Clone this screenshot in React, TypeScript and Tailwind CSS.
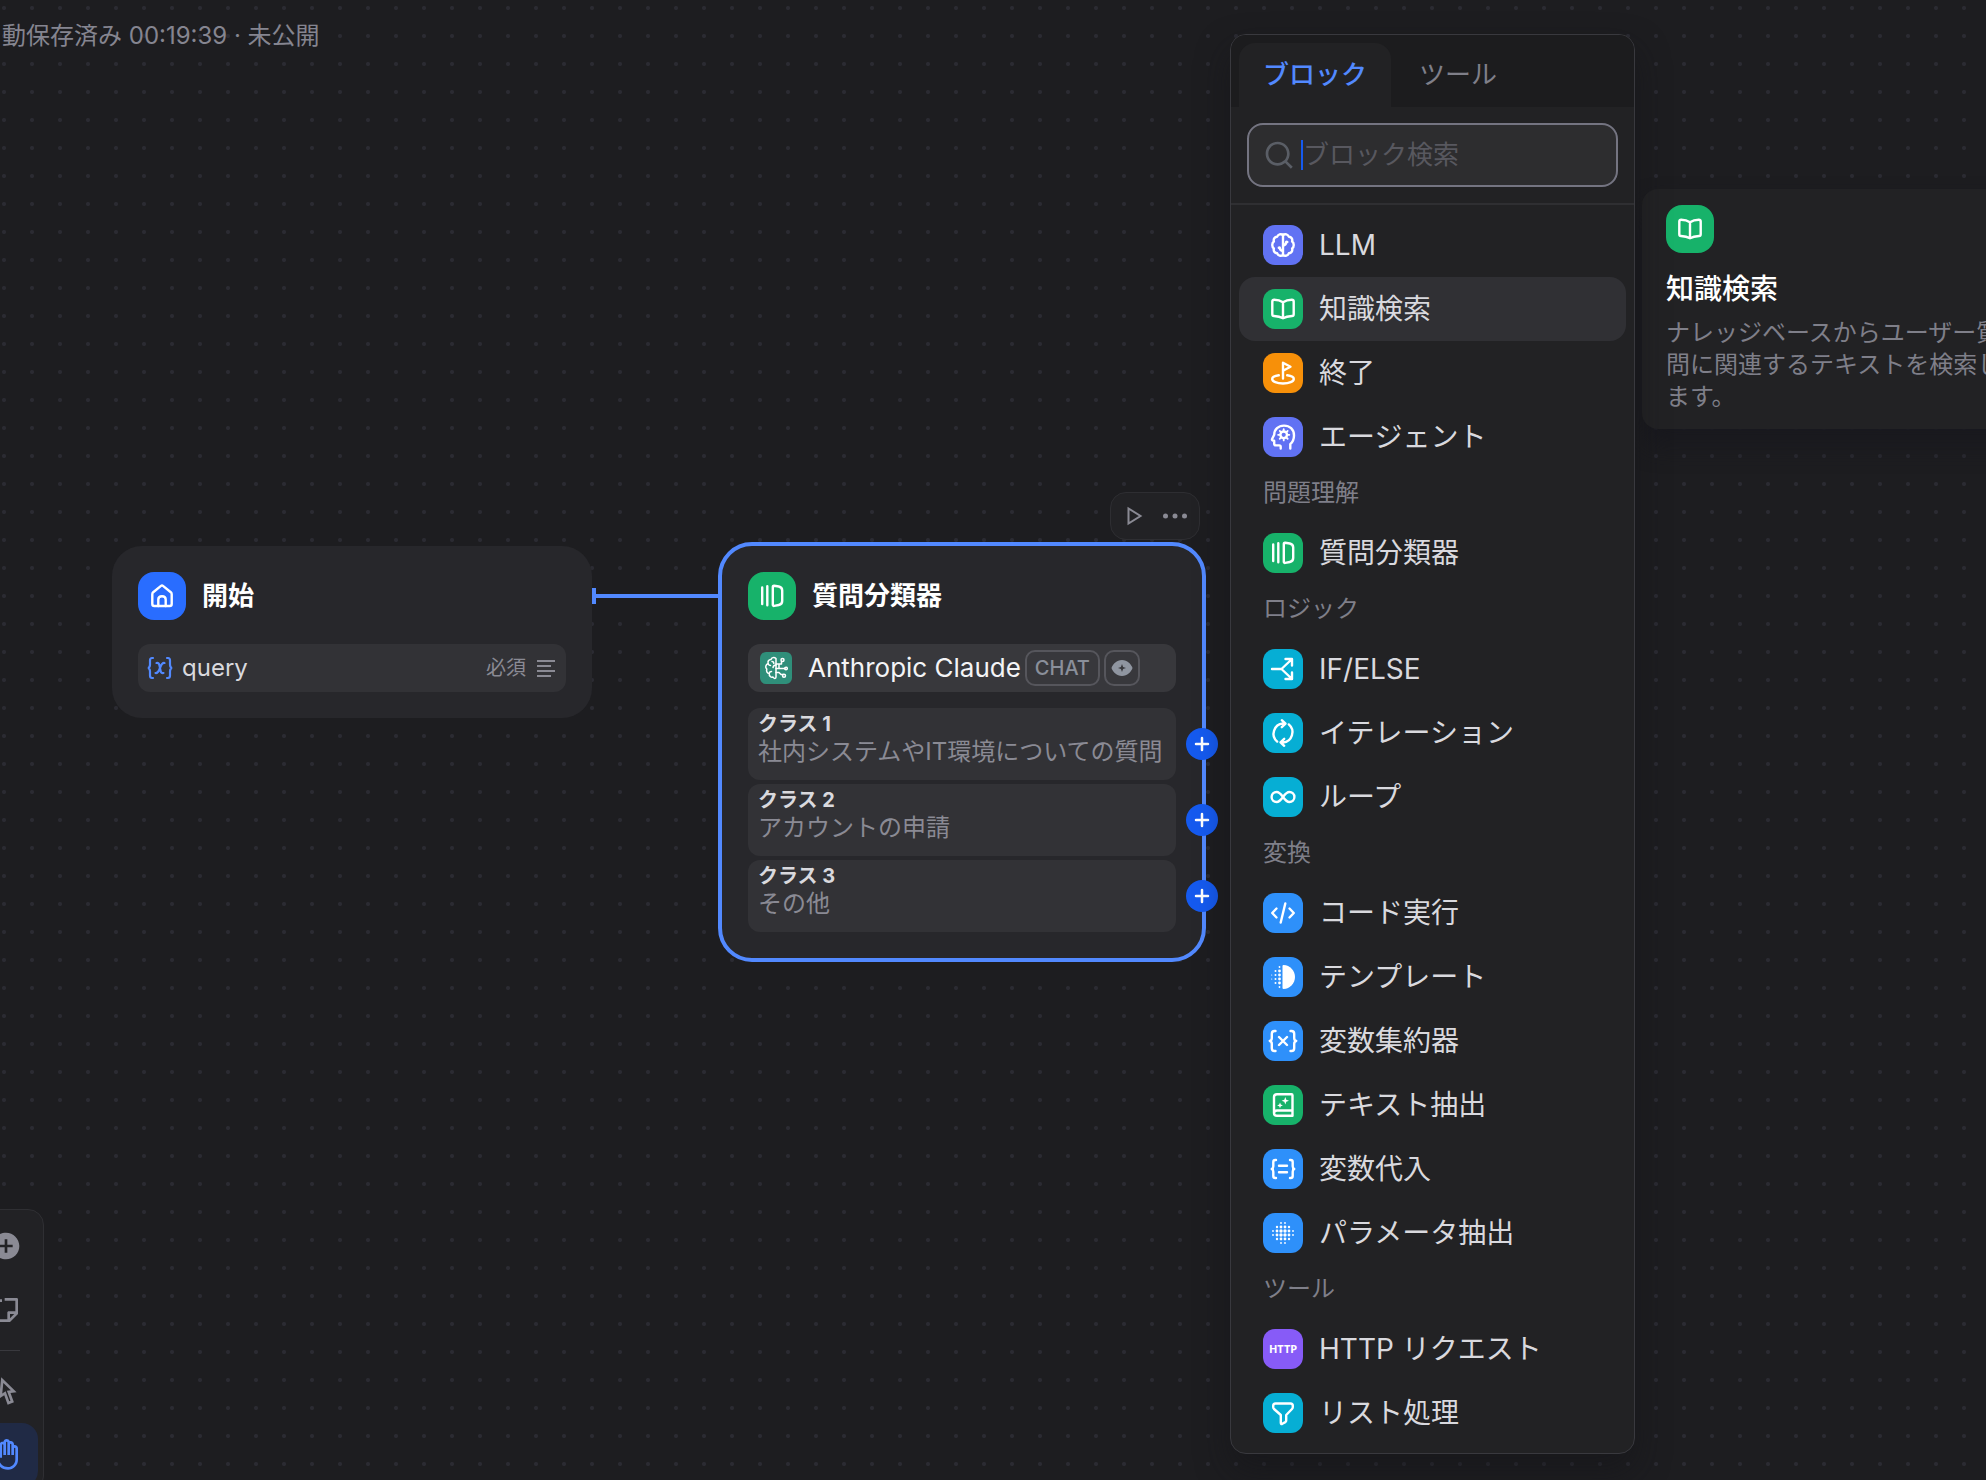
import type { ReactNode } from "react";
import { RiAddCircleFill, RiCursorLine, RiHand, RiSearchLine, RiStickyNoteAddLine } from "react-icons/ri";

type IconName =
  | "home" | "llm" | "book" | "end" | "agent" | "classifier" | "branch" | "iteration" | "loop"
  | "code" | "template" | "aggregator" | "extractor" | "assigner" | "parameter" | "http" | "filter";

const GRID = [2, 6, 10, 14, 18, 22];

const gear = Array.from({ length: 8 }, (_, i) => {
  const a = (i * Math.PI) / 4;
  return { x1: 12.7 + 3.6 * Math.cos(a), y1: 9.8 + 3.6 * Math.sin(a), x2: 12.7 + 5.6 * Math.cos(a), y2: 9.8 + 5.6 * Math.sin(a) };
});

const glyphs: Record<Exclude<IconName, "http">, ReactNode> = {
  home: (
    <>
      <path d="M2.3 10.2Q2.3 9 3.2 8.2L11 1.9Q12 1.1 13 1.9L20.8 8.2Q21.7 9 21.7 10.2V20Q21.7 22 19.7 22H4.3Q2.3 22 2.3 20Z" />
      <path d="M8.3 22V15.5Q8.3 12.2 12 12.2T15.7 15.5V22" />
    </>
  ),
  llm: (
    <>
      <path d="M12 2C10 .4 7 1.300 6.200 3.700C3.600 3.900 2.200 6 2.900 8.500C.7 10 .7 14 2.900 15.500C2.200 18 3.600 20.100 6.200 20.300C7 22.700 10 23.600 12 22C14 23.600 17 22.700 17.800 20.300C20.400 20.100 21.800 18 21.100 15.500C23.300 14 23.300 10 21.100 8.500C21.800 6 20.400 3.900 17.800 3.700C17 1.300 14 .4 12 2Z" />
      <path d="M12 2V22M12 12.500C14 12.300 15.200 11 15.200 9M12 18C10 17.800 8.800 16.600 8.800 14.800M15.300 9H16.300M8.700 14.800H7.800" />
    </>
  ),
  book: <path d="M12 5.200C9.500 3.500 6.500 2.700 3.200 2.700Q1.300 2.700 1.300 4.500V17.200Q1.300 18.900 3 19C6.500 19.200 9.500 19.800 12 21.200C14.500 19.800 17.500 19.200 21 19Q22.700 18.900 22.700 17.200V4.500Q22.700 2.700 20.800 2.700C17.500 2.700 14.500 3.500 12 5.200ZM12 5.200V21" />,
  end: (
    <>
      <path d="M12 17.500V1.800L19.500 5.800L12 9.800" />
      <path d="M7.800 14.300C3.600 14.800 1.200 16.200 1.200 18C1.200 20.600 5.800 22.500 12 22.500S22.800 20.600 22.800 18C22.800 16.200 20.400 14.800 16.200 14.300" />
    </>
  ),
  agent: (
    <>
      <path d="M19.300 23.500V19.200C21.600 17 23 13.800 23 10.400C23 4.300 18.700.6 13 .6C7.300.6 3.300 4.500 3.200 9.800L1.100 14Q.7 15.300 1.900 15.500L3.200 15.700V18.800Q3.200 20.400 4.800 20.400H8.300Q9.700 20.400 9.700 21.800V23.500" />
      <circle cx="12.700" cy="9.800" r="3.300" />
      {gear.map((g, i) => <line key={i} {...g} strokeWidth="1.8" />)}
    </>
  ),
  classifier: <path d="M2.200 3.500V20M7.300 2.200V21.300M12.800 2.900Q12.800 1.500 14.200 1.700L18.800 2.500Q22.200 3.200 22.200 6.600V17Q22.200 20.300 18.800 21L14.200 21.900Q12.800 22.100 12.800 20.700Z" />,
  branch: <path d="M1 12H10.500L20.500 2.500M10.500 12L20.500 21.500M14.500 2H21V8.500M14.500 22H21V15.500" />,
  iteration: (
    <>
      <path d="M6.200 20.600A10.300 10.300 0 0 1 12 2.500H14.300M10.800-.8L14.500 2.700L10.800 6.200" />
      <path d="M17.800 3.400A10.300 10.300 0 0 1 12 21.500H9.700M13.200 24.800L9.500 21.300L13.200 17.800" />
    </>
  ),
  loop: <path d="M12 12C10 9.200 8.200 7 5.600 7A5 5 0 0 0 5.600 17C8.200 17 10 14.800 12 12C14 9.200 15.800 7 18.400 7A5 5 0 0 1 18.400 17C15.800 17 14 14.800 12 12Z" />,
  code: <path d="M5.500 7.500L1.200 12L5.500 16.500M18.500 7.500L22.800 12L18.500 16.500M14.300 2.500L9.700 21.500" />,
  template: (
    <g fill="currentColor" stroke="none">
      <path d="M11.500 1Q11.500 0 12.500 0C19 .3 24 5.500 24 12S19 23.700 12.500 24Q11.500 24 11.500 23Z" />
      {GRID.map((y, i) => <circle key={y} cx="8.500" cy={y} r={i === 0 || i === 5 ? 0.9 : 1.4} />)}
      {GRID.slice(1, 5).map((y) => <circle key={y} cx="4.500" cy={y} r="1" />)}
      <circle cx=".7" cy="10" r=".6" />
      <circle cx=".7" cy="14" r=".6" />
    </g>
  ),
  aggregator: <path d="M4.500 2H3.500Q.8 2 .8 4.700V9Q.8 11.500-1.200 12Q.8 12.500.8 15V19.300Q.8 22 3.500 22H4.500M19.500 2H20.500Q23.200 2 23.200 4.700V9Q23.200 11.500 25.200 12Q23.200 12.500 23.200 15V19.300Q23.200 22 20.500 22H19.500M8 8L16 16M16 8L8 16" />,
  extractor: (
    <>
      <path d="M6 1.200H20.500Q21.500 1.200 21.500 2.200V22.800H6Q3 22.800 3 20V4Q3 1.200 6 1.200ZM3 20.200Q3 17.500 6 17.500H21.500" />
      <path fill="currentColor" stroke="none" d="M14.300 4L15.300 6.700L18 7.700L15.300 8.700L14.300 11.400L13.300 8.700L10.600 7.700L13.300 6.700ZM9 9.500L9.800 11.600L11.900 12.400L9.800 13.200L9 15.300L8.200 13.200L6.100 12.400L8.200 11.600Z" />
    </>
  ),
  assigner: <path d="M5 3H4.300Q2.300 3 2.300 5V9.300Q2.300 11.500.8 12Q2.300 12.500 2.300 14.700V19Q2.300 21 4.300 21H5M19 3H19.700Q21.700 3 21.700 5V9.300Q21.700 11.500 23.200 12Q21.700 12.500 21.700 14.700V19Q21.700 21 19.700 21H19M8 8.800H16M8 15.200H16" />,
  parameter: (
    <g fill="currentColor" stroke="none">
      {GRID.flatMap((x) =>
        GRID.map((y) => {
          const d = Math.hypot(x - 12, y - 12);
          return d > 11 ? null : <circle key={`${x}-${y}`} cx={x} cy={y} r={d < 4 ? 1.7 : d < 7 ? 1.4 : d < 9 ? 1.2 : 0.9} />;
        }),
      )}
    </g>
  ),
  filter: <path d="M4.500 2.500H19.500Q21.800 2.500 21.800 4.800V6Q21.800 7.200 21 8L15.200 14V19.500Q15.200 20.500 14.300 21.100L11.300 22.800Q9.800 23.500 9.800 21.800V14L3 8Q2.200 7.200 2.200 6V4.800Q2.200 2.500 4.500 2.500Z" />,
};

const iconColors: Record<IconName, string> = {
  home: "bg-[#296dff]",
  llm: "bg-[#6172f3]",
  agent: "bg-[#6172f3]",
  book: "bg-[#17b26a]",
  classifier: "bg-[#17b26a]",
  extractor: "bg-[#17b26a]",
  end: "bg-[#f79009]",
  branch: "bg-[#06aed4]",
  iteration: "bg-[#06aed4]",
  loop: "bg-[#06aed4]",
  filter: "bg-[#06aed4]",
  code: "bg-[#2e90fa]",
  template: "bg-[#2e90fa]",
  aggregator: "bg-[#2e90fa]",
  assigner: "bg-[#2e90fa]",
  parameter: "bg-[#2e90fa]",
  http: "bg-[#875bf7]",
};

function BlockIcon({ name, large = false }: { name: IconName; large?: boolean }) {
  return (
    <span
      className={`flex shrink-0 items-center justify-center text-white ${large ? "size-12 rounded-2xl" : "size-10 rounded-xl"} ${iconColors[name]}`}
    >
      {name === "http" ? (
        <span aria-hidden="true" className="font-['Noto_Sans'] text-[11px] font-bold">HTTP</span>
      ) : (
        <svg viewBox="0 0 24 24" className="size-6 overflow-visible" fill="none" stroke="currentColor" strokeWidth="2.4" strokeLinecap="round" strokeLinejoin="round" aria-hidden="true">
          {glyphs[name]}
        </svg>
      )}
    </span>
  );
}

const groups: { title?: string; items: { icon: IconName; label: string; active?: boolean }[] }[] = [
  {
    items: [
      { icon: "llm", label: "LLM" },
      { icon: "book", label: "知識検索", active: true },
      { icon: "end", label: "終了" },
      { icon: "agent", label: "エージェント" },
    ],
  },
  { title: "問題理解", items: [{ icon: "classifier", label: "質問分類器" }] },
  {
    title: "ロジック",
    items: [
      { icon: "branch", label: "IF/ELSE" },
      { icon: "iteration", label: "イテレーション" },
      { icon: "loop", label: "ループ" },
    ],
  },
  {
    title: "変換",
    items: [
      { icon: "code", label: "コード実行" },
      { icon: "template", label: "テンプレート" },
      { icon: "aggregator", label: "変数集約器" },
      { icon: "extractor", label: "テキスト抽出" },
      { icon: "assigner", label: "変数代入" },
      { icon: "parameter", label: "パラメータ抽出" },
    ],
  },
  {
    title: "ツール",
    items: [
      { icon: "http", label: "HTTP リクエスト" },
      { icon: "filter", label: "リスト処理" },
    ],
  },
];

function BlockMenu() {
  return (
    <section aria-label="ブロック" className="absolute left-[1230px] top-[34px] w-[405px] overflow-hidden rounded-2xl border border-[#39393e] bg-[#222224] shadow-[0_16px_32px_rgba(20,20,24,0.5)]">
      <div role="tablist" className="flex gap-1 bg-[#1c1c1e] px-2 pt-2 text-[26px] leading-8">
        <button role="tab" aria-selected="true" className="h-16 rounded-t-2xl bg-[#222224] px-6 font-medium text-[#5289ff]">ブロック</button>
        <button role="tab" aria-selected="false" className="h-16 px-6 text-[#7f7f89]">ツール</button>
      </div>
      <div className="border-b-2 border-[#2f2f32] p-4">
        <label className="flex h-16 items-center rounded-2xl border-2 border-[#747481] bg-[#2d2d2f] pl-3.5 pr-4">
          <RiSearchLine className="mr-1.5 size-8 shrink-0 text-[#5a5e66]" aria-hidden="true" />
          <span className="h-[30px] w-0.5 shrink-0 bg-[#155aef]" />
          <input aria-label="ブロック検索" placeholder="ブロック検索" className="min-w-0 flex-1 bg-transparent text-[26px] leading-8 text-[#d9d9de] outline-none placeholder:text-[#58585f]" />
        </label>
      </div>
      <div className="p-2">
        {groups.map((group, i) => (
          <div key={i}>
            {group.title && <h3 className="h-13 px-6 text-2xl leading-12 text-[#7f7f89]">{group.title}</h3>}
            {group.items.map((item) => (
              <button key={item.label} className={`flex h-16 w-full items-center gap-4 rounded-2xl px-6 text-left text-[28px] leading-10 text-[#d9d9de] ${item.active ? "bg-[#303034]" : ""}`}>
                <BlockIcon name={item.icon} />
                {item.label}
              </button>
            ))}
          </div>
        ))}
      </div>
    </section>
  );
}

function BlockTooltip() {
  return (
    <aside role="tooltip" className="absolute left-[1642px] top-[189px] w-[400px] rounded-2xl bg-[#222224] px-6 py-4 shadow-[0_16px_24px_rgba(24,24,30,0.9)]">
      <BlockIcon name="book" large />
      <h2 className="mb-2 mt-4 text-[28px] font-medium leading-10 text-white">知識検索</h2>
      <p className="text-2xl leading-8 text-[#7f7f89]">ナレッジベースからユーザー質問に関連するテキストを検索します。</p>
    </aside>
  );
}

function StartNode() {
  return (
    <article className="absolute left-[112px] top-[546px] w-[480px] rounded-[30px] bg-[#27272b] p-[26px]">
      <header className="flex items-center gap-4">
        <BlockIcon name="home" large />
        <h2 className="text-[26px] font-bold leading-8 text-white">開始</h2>
      </header>
      <div className="mt-6 flex h-12 items-center rounded-xl bg-[#323236] pl-2 pr-2.5">
        <svg viewBox="0 0 28 24" className="mr-2 h-6 w-7 text-[#5289ff]" fill="none" stroke="currentColor" strokeWidth="2.200" strokeLinecap="round" aria-hidden="true">
          <path d="M7 2H6Q4 2 4 4.500V8.500Q4 11.500 2 12Q4 12.500 4 15.500V19.500Q4 22 6 22H7M21 2H22Q24 2 24 4.500V8.500Q24 11.500 26 12Q24 12.500 24 15.500V19.500Q24 22 22 22H21M10.500 7Q13 6.500 13.500 9.500L14.500 14.500Q15 17.500 17.500 17M18.500 7Q16 6.500 14 12T9.500 17" />
        </svg>
        <span className="flex-1 text-2xl leading-8 text-[#d9d9de]">query</span>
        <span className="text-xl leading-6 text-[#8a8a94]">必須</span>
        <svg viewBox="0 0 20 18" className="ml-2.5 h-[18px] w-5 text-[#8a8a94]" stroke="currentColor" strokeWidth="2" aria-hidden="true">
          <path d="M1 2H19M1 7H15M1 12H19M1 17H15" />
        </svg>
      </div>
    </article>
  );
}

const classes = [
  { title: "クラス 1", text: "社内システムやIT環境についての質問" },
  { title: "クラス 2", text: "アカウントの申請" },
  { title: "クラス 3", text: "その他" },
];

function ClassifierNode() {
  return (
    <article className="absolute left-[718px] top-[542px] w-[488px] rounded-[34px] border-4 border-[#5289ff] bg-[#27272b] px-[26px] py-[26px]">
      <header className="flex items-center gap-4">
        <BlockIcon name="classifier" large />
        <h2 className="text-[26px] font-bold leading-8 text-white">質問分類器</h2>
      </header>
      <div className="mt-6 flex h-12 items-center rounded-xl bg-[#38383c] px-3">
        <span className="mr-4 flex size-8 items-center justify-center rounded-md bg-[#2f8f7a] text-white">
          <svg viewBox="0 0 24 24" className="size-6" fill="none" stroke="currentColor" strokeWidth="1.500" strokeLinecap="round" strokeLinejoin="round" aria-hidden="true">
            <path d="M12 2.500C10 .8 7.500 1.500 7 3.500C4.500 3.500 3.500 5.500 4.200 7.500C1.500 8.500 1 11.500 2.800 13C2 15.500 3.300 17.300 5.200 17.500C5 20 7 21.800 9 21C10 23 12 22.700 12 21Z" />
            <path d="M4.200 8Q5 9.500 6.500 9.500M8 5.500Q9.800 5.500 9.800 7.500M5.300 17.300Q5.500 15.500 7.500 15.500M12 9Q9.500 9 9 11.500M12 8H17.500V5.500M12 12.500H21M12 16.500H15L17 18.500H19.500M15 8V12" />
            <circle cx="18.500" cy="4" r="1.500" /><circle cx="22" cy="12.500" r="1.300" /><circle cx="20" cy="19.800" r="1.500" />
          </svg>
        </span>
        <span className="text-[26px] leading-8 text-[#f4f4f6]">Anthropic Claude</span>
        <span className="ml-1 flex h-9 items-center rounded-[10px] border-2 border-[#56565c] px-2 text-xl font-medium leading-6 text-[#8a8f9a]">CHAT</span>
        <span className="ml-1 flex size-9 items-center justify-center rounded-[10px] border-2 border-[#56565c] text-[#8f95a0]">
          <svg viewBox="0 0 24 24" className="size-6" fill="currentColor" fillRule="evenodd" aria-hidden="true">
            <path d="M12 4C17.500 4 20.800 8.200 22.200 11Q22.700 12 22.200 13C20.800 15.800 17.500 20 12 20S3.200 15.800 1.800 13Q1.300 12 1.800 11C3.200 8.200 6.500 4 12 4ZM12 8L10.900 10.900L8 12L10.900 13.100L12 16L13.100 13.100L16 12L13.100 10.900Z" />
          </svg>
        </span>
      </div>
      <ul className="mt-4 flex flex-col gap-1">
        {classes.map((c) => (
          <li key={c.title} className="relative h-[72px] rounded-xl bg-[#323236] px-2.5 pt-1">
            <h3 className="text-xl font-bold leading-6 text-[#d9d9de]">{c.title}</h3>
            <p className="whitespace-nowrap text-2xl leading-8 text-[#8a8a94]">{c.text}</p>
            <button aria-label={`${c.title} に追加`} className="absolute -right-[42px] top-5 flex size-8 items-center justify-center rounded-full bg-[#155aef] text-white">
              <svg viewBox="0 0 16 16" className="size-4" stroke="currentColor" strokeWidth="2.500" strokeLinecap="round" aria-hidden="true">
                <path d="M8 2V14M2 8H14" />
              </svg>
            </button>
          </li>
        ))}
      </ul>
    </article>
  );
}

function NodeToolbar() {
  return (
    <div role="toolbar" aria-label="ノード操作" className="absolute left-[1110px] top-[492px] flex h-12 w-[90px] items-center justify-center gap-2 rounded-2xl border border-[#2e2e32] bg-[#222225] text-[#8a8a94]">
      <button aria-label="実行" className="flex size-8 items-center justify-center">
        <svg viewBox="0 0 24 24" className="size-6" fill="none" stroke="currentColor" strokeWidth="2" aria-hidden="true">
          <path d="M5.500 4.500V19.500L17.500 12Z" />
        </svg>
      </button>
      <button aria-label="その他の操作" className="flex size-8 items-center justify-center">
        <svg viewBox="0 0 24 6" className="h-1.5 w-6" fill="currentColor" aria-hidden="true">
          <circle cx="2.500" cy="3" r="2.500" /><circle cx="12" cy="3" r="2.500" /><circle cx="21.500" cy="3" r="2.500" />
        </svg>
      </button>
    </div>
  );
}

function CanvasToolbar() {
  const button = "flex size-16 items-center justify-center rounded-2xl";
  return (
    <div role="toolbar" aria-label="キャンバス操作" className="absolute -left-8 top-[1209px] flex w-[76px] flex-col items-center rounded-2xl border border-[#2f2f33] bg-[#222225] py-1 text-[#8a8a94]">
      <button aria-label="ブロックを追加" className={button}><RiAddCircleFill className="size-8" /></button>
      <button aria-label="メモを追加" className={button}><RiStickyNoteAddLine className="size-8" /></button>
      <hr className="my-2 w-7 border-[#39393e]" />
      <button aria-label="ポインターモード" className={button}><RiCursorLine className="size-8" /></button>
      <button aria-label="ハンドモード" aria-pressed="true" className={`${button} bg-[#202a45] text-[#5289ff]`}><RiHand className="size-8" /></button>
    </div>
  );
}

export default function App() {
  return (
    <main
      lang="ja"
      className="relative h-screen w-full overflow-hidden bg-[#1d1d20] bg-[radial-gradient(circle,#2b2b32_1.500px,transparent_2.500px)] bg-[length:28px_28px] bg-[position:-10px_-6px] font-['Inter','Noto_Sans_CJK_JP',sans-serif]"
    >
      <p className="pl-0.5 pt-5 text-2xl leading-8 text-[#858590]">動保存済み 00:19:39 · 未公開</p>
      <svg className="absolute left-[592px] top-[588px] h-4 w-[128px] text-[#5289ff]" viewBox="0 0 128 16" fill="currentColor" aria-hidden="true">
        <path d="M0 0H4V6H128V10H4V16H0Z" />
      </svg>
      <StartNode />
      <NodeToolbar />
      <ClassifierNode />
      <BlockTooltip />
      <BlockMenu />
      <CanvasToolbar />
    </main>
  );
}
